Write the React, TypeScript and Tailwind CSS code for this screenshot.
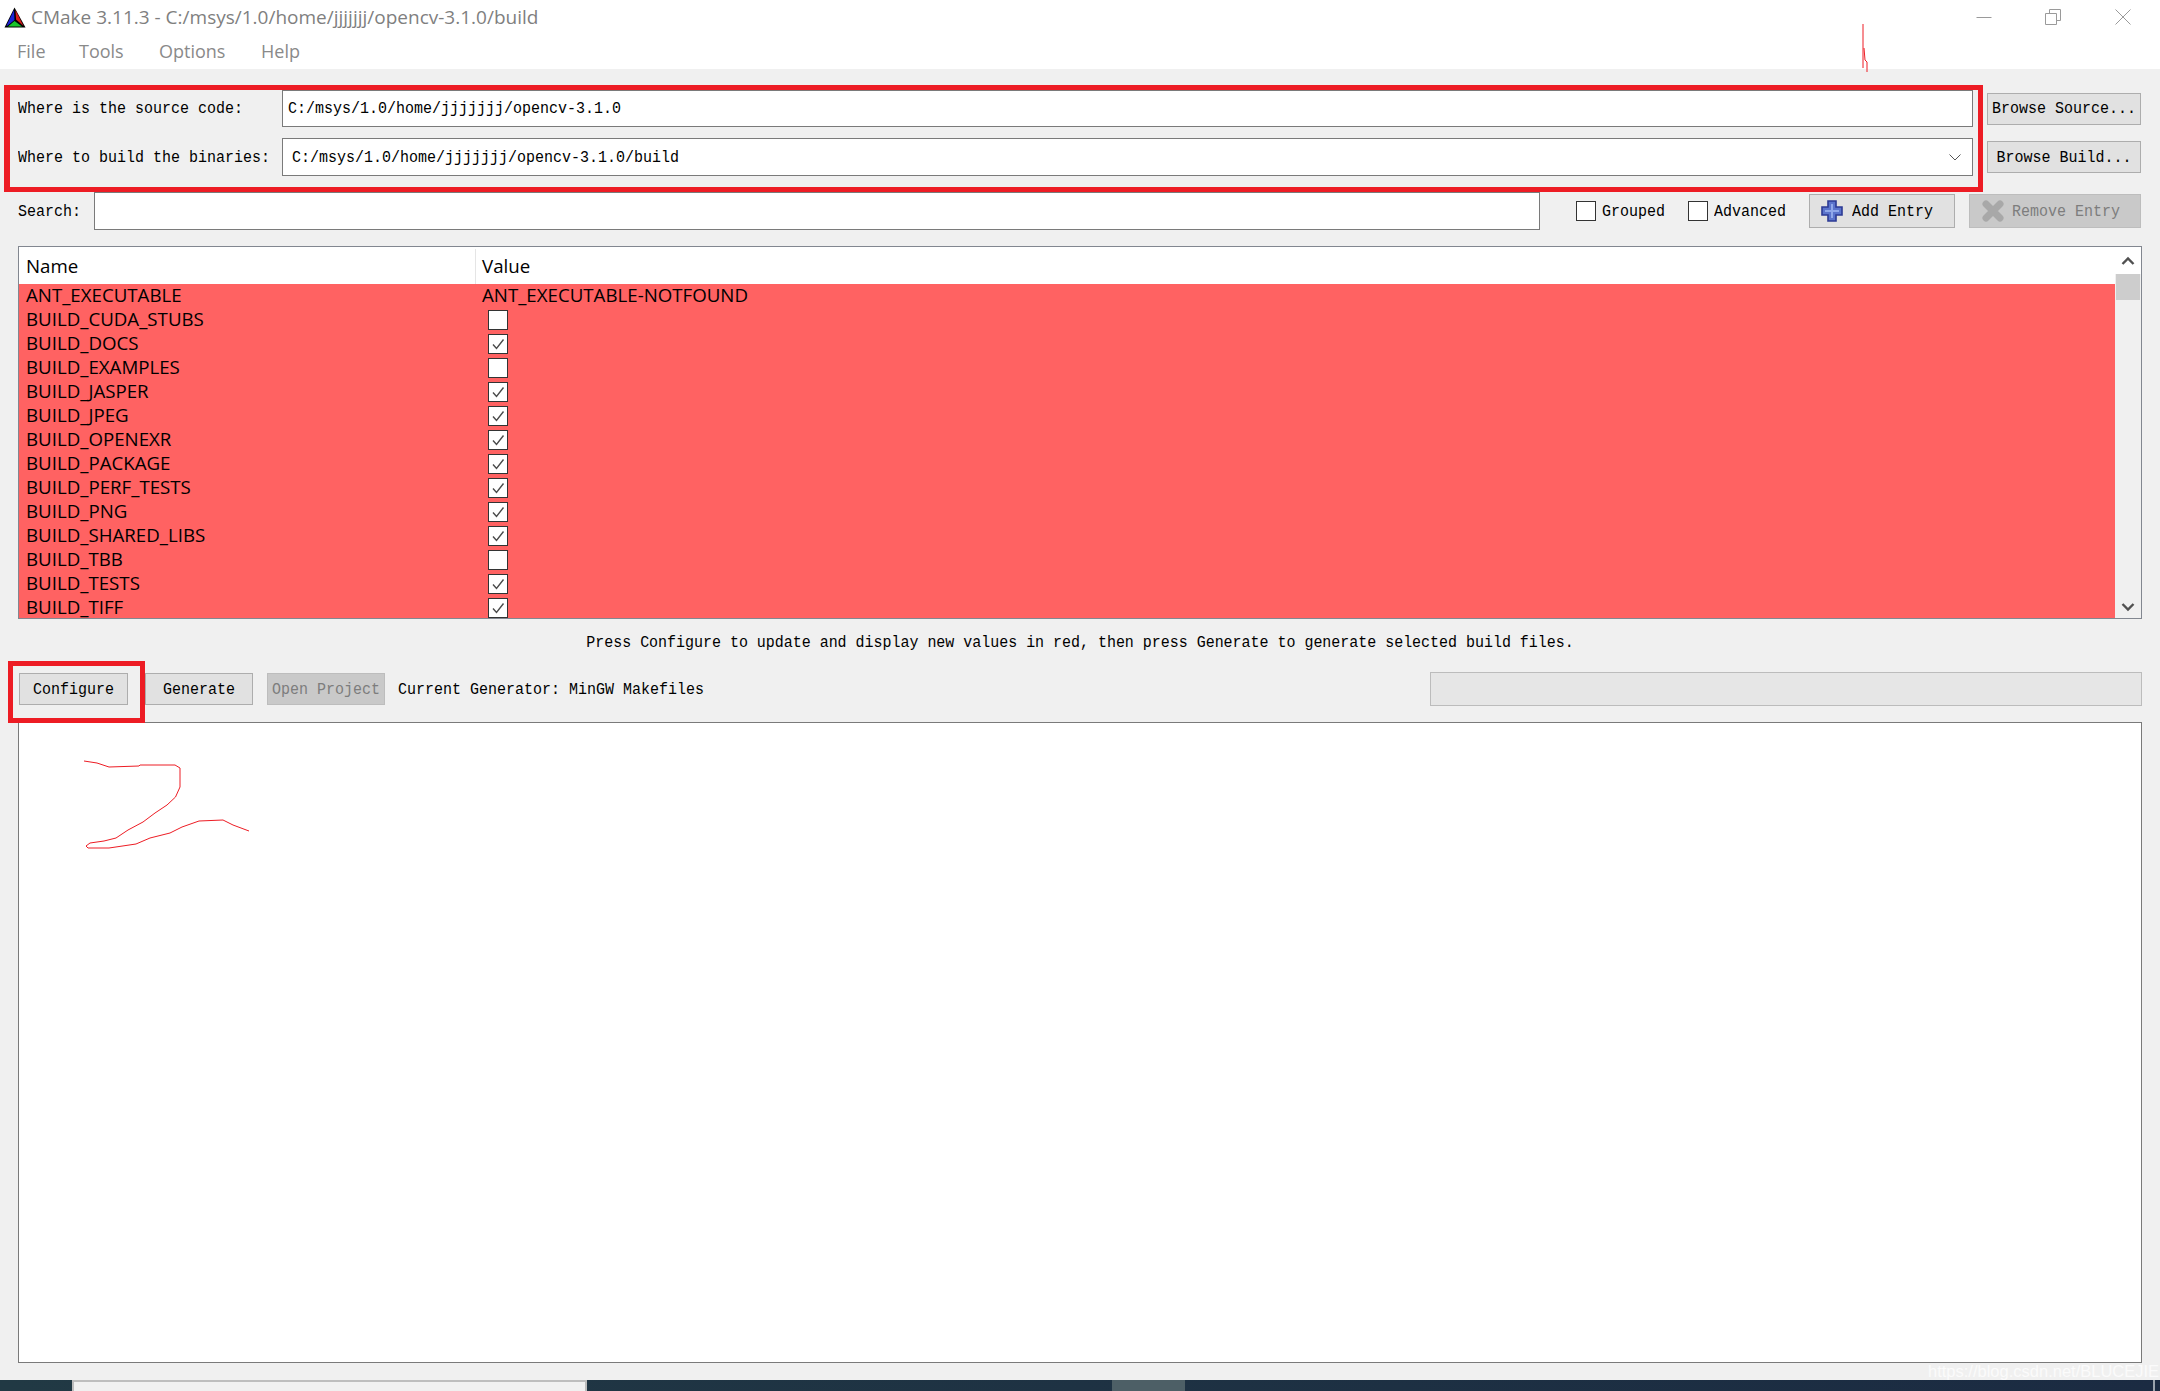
import type { ReactNode } from "react";

const mono = "font-['Liberation_Mono',monospace] text-[15px] text-black";
const ui = "font-['Open_Sans',sans-serif] text-[18.7px]";

// the screenshot's bitmap font is taller than Liberation Mono at the same advance
const M = ({ children, className }: { children: ReactNode; className?: string }) => (
  <span className={`inline-block scale-y-[1.15] whitespace-pre pt-[2px] ${className ?? ""}`}>{children}</span>
);

const rows: { name: string; checked?: boolean; value?: string }[] = [
  { name: "ANT_EXECUTABLE", value: "ANT_EXECUTABLE-NOTFOUND" },
  { name: "BUILD_CUDA_STUBS", checked: false },
  { name: "BUILD_DOCS", checked: true },
  { name: "BUILD_EXAMPLES", checked: false },
  { name: "BUILD_JASPER", checked: true },
  { name: "BUILD_JPEG", checked: true },
  { name: "BUILD_OPENEXR", checked: true },
  { name: "BUILD_PACKAGE", checked: true },
  { name: "BUILD_PERF_TESTS", checked: true },
  { name: "BUILD_PNG", checked: true },
  { name: "BUILD_SHARED_LIBS", checked: true },
  { name: "BUILD_TBB", checked: false },
  { name: "BUILD_TESTS", checked: true },
  { name: "BUILD_TIFF", checked: true },
];

const Logo = () => (
  <svg width="22" height="21" viewBox="0 0 22 21" className="ml-[4px] mr-[5px] shrink-0">
    <path d="M10.5 0.5 L21.5 20.5 L0.5 20.5 Z" fill="#000" />
    <path d="M10 3 L10.5 13 L3 19 L2.5 18.5 Z" fill="#1b22d8" />
    <path d="M11.5 3 L19.5 19 L12 12.5 Z" fill="#d81b1b" />
    <path d="M10.5 14 L18 19.5 L4 19.5 Z" fill="#17c52c" />
  </svg>
);

const WindowControls = () => (
  <div className="ml-auto mr-[29px] flex items-center">
    <svg width="16" height="16" viewBox="0 0 16 16" className="mr-[53px]">
      <path d="M0.5 8.5 H15.5" stroke="#9a9a9a" strokeWidth="1" />
    </svg>
    <svg width="16" height="16" viewBox="0 0 16 16" className="mr-[54px]">
      <path d="M0.5 4.5 H11.5 V15.5 H0.5 Z M4.5 4 V0.5 H15.5 V11.5 H12" fill="none" stroke="#9a9a9a" strokeWidth="1" />
    </svg>
    <svg width="16" height="16" viewBox="0 0 16 16">
      <path d="M0.5 0.5 L15.5 15.5 M15.5 0.5 L0.5 15.5" stroke="#9a9a9a" strokeWidth="1" />
    </svg>
  </div>
);

const Button = ({ label, className }: { label: string; className: string }) => (
  <button
    className={`flex h-[32px] items-center justify-center border border-[#adadad] bg-[#e1e1e1] ${mono} ${className}`}
  >
    <M>{label}</M>
  </button>
);

const Box = ({ checked, className }: { checked?: boolean; className?: string }) => (
  <span className={`flex h-[20px] w-[20px] shrink-0 items-center justify-center border border-[#333] bg-white ${className ?? ""}`}>
    {checked && (
      <svg width="14" height="12" viewBox="0 0 14 12">
        <path d="M2 6.5 L5.5 10.5 L12.5 1.5" fill="none" stroke="#4a4a4a" strokeWidth="1.4" />
      </svg>
    )}
  </span>
);

const Table = () => (
  <div className="mx-[18px] mt-[16px] flex h-[373px] w-[2124px] shrink-0 overflow-hidden border border-[#828790] bg-white">
    <div className="min-w-0 flex-1">
      <div className={`flex h-[37px] items-center pt-[2px] text-black ${ui}`}>
        <div className="flex h-full w-[457px] items-center border-r border-[#e5e5e5] pl-[7px]">Name</div>
        <div className="pl-[6px]">Value</div>
      </div>
      {rows.map((r) => (
        <div key={r.name} className={`flex h-[24px] items-center bg-[#ff6262] text-black ${ui}`}>
          <div className="w-[457px] pb-[2px] pl-[7px] leading-[22px]">{r.name}</div>
          {r.value ? (
            <div className="pb-[2px] pl-[6px] leading-[22px]">{r.value}</div>
          ) : (
            <Box checked={r.checked} className="ml-[12px]" />
          )}
        </div>
      ))}
    </div>
    <div className="relative flex w-[26px] shrink-0 flex-col items-center bg-[#f0f0f0]">
      <div className="flex h-[27px] w-full items-center justify-center bg-white">
        <svg width="14" height="10" viewBox="0 0 14 10">
          <path d="M1.5 8 L7 2.5 L12.5 8" fill="none" stroke="#505050" strokeWidth="2.4" />
        </svg>
      </div>
      <div className="h-[26px] w-[24px] bg-[#cdcdcd]" />
      <div className="mt-auto mb-[6px] flex h-[10px] items-center">
        <svg width="14" height="10" viewBox="0 0 14 10">
          <path d="M1.5 2 L7 7.5 L12.5 2" fill="none" stroke="#505050" strokeWidth="2.4" />
        </svg>
      </div>
    </div>
  </div>
);

const Scribbles = () => (
  <svg width="2160" height="1391" viewBox="0 0 2160 1391" className="pointer-events-none absolute left-0 top-0">
    <path
      d="M1863 24 V68 M1864 48 L1865 60 L1867 62 L1867 72"
      fill="none"
      stroke="#ed1c24"
      strokeWidth="1"
    />
    <path
      d="M84 761 L97 763 L109 767 L139 766 L140 765 L175 765 L180 768 L180 787 L175.5 797 L167 805 L155 813 L143 822 L128 830 L116 838 L104 841 L90 843 L86 846 L88 848 L109 848 L136 844 L150 838 L170 833 L182 827 L199 821 L223 820 L233 825 L249 831"
      fill="none"
      stroke="#ed1c24"
      strokeWidth="1"
    />
  </svg>
);

export default function App() {
  return (
    <div className="relative flex h-[1391px] w-[2160px] flex-col overflow-hidden bg-[#f0f0f0]">
      <div className="bg-white">
        <div className="flex h-[34px] items-center font-['Open_Sans',sans-serif] text-[19px] text-[#7f7f7f]">
          <Logo />
          <span>CMake 3.11.3 - C:/msys/1.0/home/jjjjjjj/opencv-3.1.0/build</span>
          <WindowControls />
        </div>
        <div className="flex h-[35px] items-center pl-[17px] font-['Open_Sans',sans-serif] text-[18px] text-[#8a8a8a]">
          <span className="w-[62px]">File</span>
          <span className="w-[80px]">Tools</span>
          <span className="w-[102px]">Options</span>
          <span>Help</span>
        </div>
      </div>

      <div className="mt-[21px] flex h-[37px] items-center pl-[18px] pr-[19px]">
        <label className={`w-[264px] ${mono}`}><M>Where is the source code:</M></label>
        <div className={`flex h-full w-[1691px] items-center border border-[#7a7a7a] bg-white pl-[5px] ${mono}`}>
          <M>C:/msys/1.0/home/jjjjjjj/opencv-3.1.0</M>
        </div>
        <Button label="Browse Source..." className="ml-auto w-[154px]" />
      </div>

      <div className="mt-[11px] flex h-[38px] items-center pl-[18px] pr-[19px]">
        <label className={`w-[264px] ${mono}`}><M>Where to build the binaries:</M></label>
        <div className={`flex h-full w-[1691px] items-center border border-[#7a7a7a] bg-white pl-[9px] ${mono}`}>
          <M>C:/msys/1.0/home/jjjjjjj/opencv-3.1.0/build</M>
          <svg width="12" height="7" viewBox="0 0 12 7" className="ml-auto mr-[11px]">
            <path d="M0.5 0.5 L6 6 L11.5 0.5" fill="none" stroke="#555" strokeWidth="1" />
          </svg>
        </div>
        <Button label="Browse Build..." className="ml-auto w-[154px]" />
      </div>

      <div className="mt-[16px] flex h-[38px] items-center pl-[18px] pr-[19px]">
        <label className={`w-[76px] ${mono}`}><M>Search:</M></label>
        <input className="h-full w-[1446px] border border-[#7a7a7a] bg-white" />
        <Box className="ml-[36px]" />
        <span className={`ml-[6px] w-[86px] ${mono}`}><M>Grouped</M></span>
        <Box />
        <span className={`ml-[6px] w-[95px] ${mono}`}><M>Advanced</M></span>
        <button className={`flex h-[34px] w-[146px] items-center border border-[#adadad] bg-[#e1e1e1] pl-[11px] ${mono}`}>
          <svg width="22" height="22" viewBox="0 0 22 22" className="mr-[9px]">
            <path d="M7 1 H15 V7 H21 V15 H15 V21 H7 V15 H1 V7 H7 Z" fill="#5b74cc" stroke="#2c3a94" strokeWidth="1.6" />
            <path d="M11 4 V18 M4 11 H18" stroke="#90a8ea" strokeWidth="2" />
          </svg>
          <M>Add Entry</M>
        </button>
        <button className="ml-[14px] flex h-[34px] w-[172px] items-center border border-[#bdbdbd] bg-[#c9c9c9] pl-[12px] font-['Liberation_Mono',monospace] text-[15px] text-[#7d7d7d]">
          <svg width="22" height="22" viewBox="0 0 22 22" className="mr-[8px]">
            <path d="M4 4 L18 18 M18 4 L4 18" stroke="#a8a8a8" strokeWidth="7" strokeLinecap="round" />
          </svg>
          <M>Remove Entry</M>
        </button>
      </div>

      <Table />

      <div className={`flex h-[46px] shrink-0 items-center justify-center tracking-[-0.025px] ${mono}`}>
        <M>Press Configure to update and display new values in red, then press Generate to generate selected build files.</M>
      </div>

      <div className="mt-[7px] flex h-[34px] shrink-0 items-center pl-[19px] pr-[18px]">
        <Button label="Configure" className="w-[109px]" />
        <Button label="Generate" className="ml-[17px] w-[108px]" />
        <button className="ml-[14px] flex h-[32px] w-[118px] items-center justify-center border border-[#bdbdbd] bg-[#c9c9c9] font-['Liberation_Mono',monospace] text-[15px] text-[#7d7d7d]">
          <M>Open Project</M>
        </button>
        <span className={`ml-[13px] ${mono}`}><M>Current Generator: MinGW Makefiles</M></span>
        <div className="ml-auto h-full w-[712px] border border-[#bcbcbc] bg-[#e6e6e6]" />
      </div>

      <div className="mx-[18px] mt-[16px] h-[641px] w-[2124px] shrink-0 border border-[#7a7a7a] bg-white" />

      <div className="mt-auto flex h-[11px] w-full bg-gradient-to-r from-[#213944] to-[#1b2b42]">
        <div className="ml-[72px] w-[515px] border-x-2 border-t-2 border-[#bdbdbd] bg-[#f0f0f0]" />
        <div className="ml-[525px] w-[73px] bg-[#4d5f66]" />
        <div className="ml-[968px] w-[2px] bg-[#9aa3ad]" />
      </div>

      {/* annotations drawn on top of the screenshot */}
      <div className="pointer-events-none absolute left-[4px] top-[85px] h-[107px] w-[1979px] border-[5px] border-l-[6px] border-[#ed1c24]" />
      <div className="pointer-events-none absolute left-[8px] top-[661px] h-[62px] w-[137px] border-[5px] border-[#ed1c24]" />
      <Scribbles />

      <span className="absolute left-[1928px] top-[1361px] font-['Liberation_Sans',sans-serif] text-[16.5px] leading-[20px] text-[#fbfbfb]">
        https://blog.csdn.net/BLUCEJIE
      </span>
      <span className="absolute left-[2001px] top-[1387px] font-['Open_Sans',sans-serif] text-[15px] leading-[20px] text-white">
        10:38
      </span>
    </div>
  );
}
